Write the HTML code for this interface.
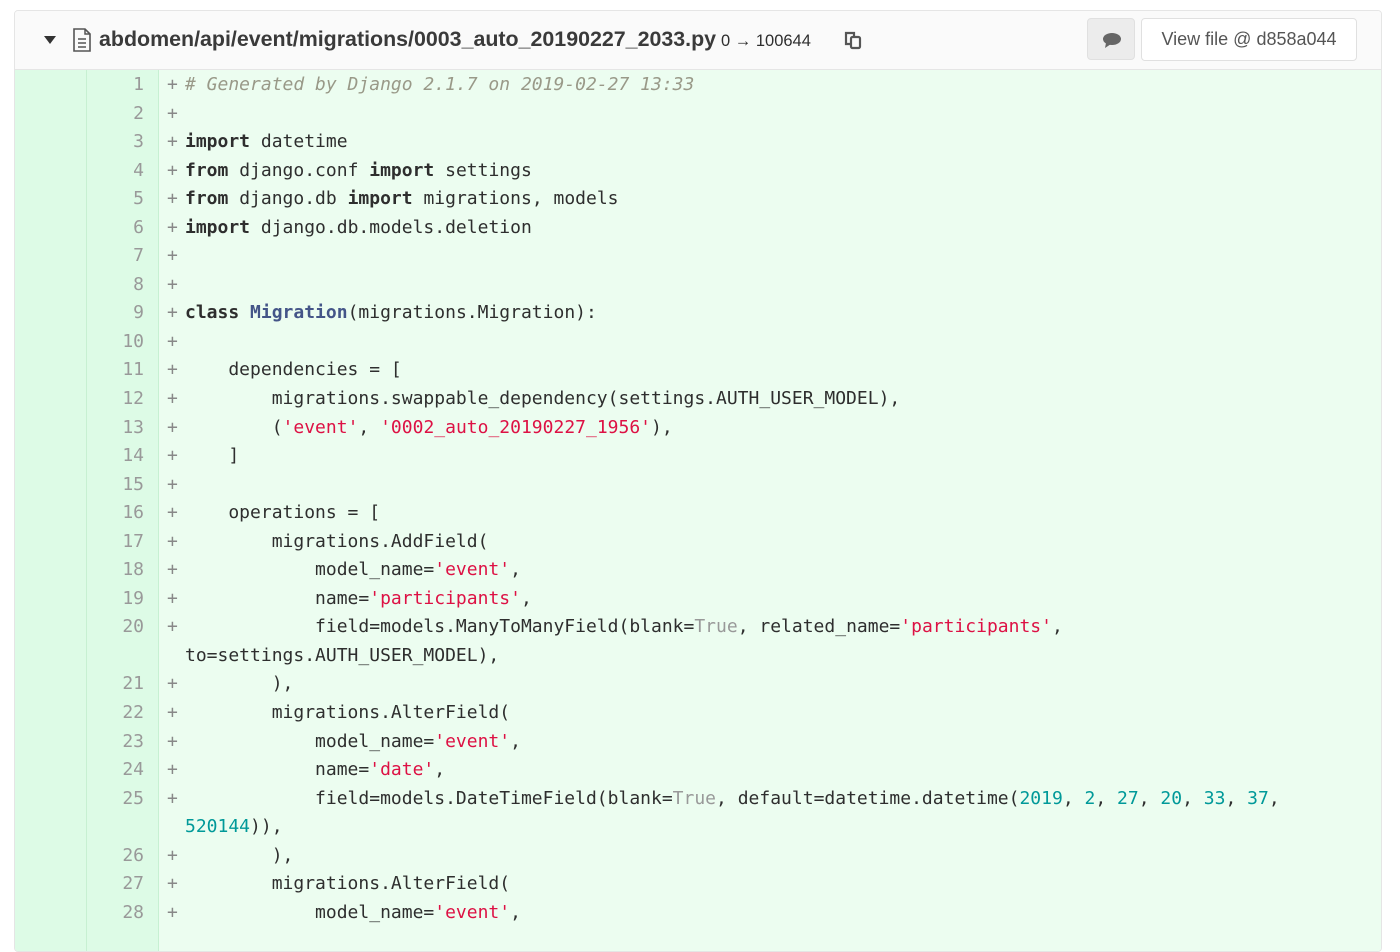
<!DOCTYPE html>
<html><head><meta charset="utf-8"><style>
body{margin:0;background:#fff;width:1400px;height:924px;overflow:hidden;font-family:"Liberation Sans",sans-serif}
.box{position:absolute;left:14px;top:10px;width:1366px;height:940px;border:1px solid #e5e5e5;border-radius:4px;overflow:hidden}
.hdr{height:58px;background:#fafafa;border-bottom:1px solid #e5e5e5;position:relative}
.path{position:absolute;left:84px;top:16px;font-size:21.4px;font-weight:bold;color:#3a3a3a}
.mode{position:absolute;left:706px;top:21px;font-size:16.5px;color:#2e2e2e}
.cbtn{position:absolute;left:1072px;top:7px;width:48px;height:42px;background:#ececec;border:1px solid #e0e0e0;border-radius:4px;box-sizing:border-box}
.vbtn{position:absolute;left:1126px;top:7px;width:216px;height:43px;background:#fff;border:1px solid #e0e0e0;border-radius:4px;box-sizing:border-box;font-size:18px;color:#555;text-align:center;line-height:41px}
.code{position:relative;background:#ecfdf0;height:900px;padding-top:1px}
.ln1{position:absolute;left:0;top:0;width:71px;height:900px;background:#ddfbe6;border-right:1px solid #c7f0d2}
.ln2{position:absolute;left:72px;top:0;width:71px;height:900px;background:#ddfbe6;border-right:1px solid #c7f0d2}
.r{height:28.55px;line-height:28.55px;font-family:"DejaVu Sans Mono","Liberation Mono",monospace;font-size:18px;white-space:pre;position:relative;color:#2e2e2e}
.n{position:absolute;left:72px;width:57px;text-align:right;color:#999}
.p{position:absolute;left:152px;color:#888}
.t{position:absolute;left:170px}
.k{font-weight:bold}
.c{color:#998;font-style:italic}
.s{color:#d14}
.m{color:#099}
.g{color:#999}
.cl{color:#458;font-weight:bold}
</style></head><body>
<div class="box">
<div class="hdr">
<svg style="position:absolute;left:28px;top:24px" width="14" height="10"><path d="M1 1h12L7 9z" fill="#333"/></svg>
<svg style="position:absolute;left:57px;top:17px" width="20" height="24" viewBox="0 0 20 24"><path d="M2 1h11l5 5v17H2z" fill="none" stroke="#555" stroke-width="1.6"/><path d="M13 1v5h5M6 11h8M6 15h8M6 19h8" stroke="#555" stroke-width="1.5" fill="none"/></svg>
<div class="path">abdomen/api/event/migrations/0003_auto_20190227_2033.py</div>
<div class="mode">0 → 100644</div>
<svg style="position:absolute;left:828px;top:19px" width="20" height="20" viewBox="0 0 20 20"><path d="M7 14H3V3h8v3" fill="none" stroke="#555" stroke-width="2.2"/><rect x="8" y="7" width="9" height="11" rx="1.5" fill="none" stroke="#555" stroke-width="2.2"/></svg>
<div class="cbtn"><svg style="position:absolute;left:14px;top:13px" width="20" height="16" viewBox="0 0 20 16"><ellipse cx="10" cy="7" rx="9" ry="6" fill="#666"/><path d="M4 11l-1 5 6-4z" fill="#666"/></svg></div>
<div class="vbtn">View file @ d858a044</div>
</div>
<div class="code">
<div class="ln1"></div><div class="ln2"></div>
<div class="r"><span class="n">1</span><span class="p">+</span><span class="t"><span class="c"># Generated by Django 2.1.7 on 2019-02-27 13:33</span></span></div>
<div class="r"><span class="n">2</span><span class="p">+</span></div>
<div class="r"><span class="n">3</span><span class="p">+</span><span class="t"><span class="k">import</span> datetime</span></div>
<div class="r"><span class="n">4</span><span class="p">+</span><span class="t"><span class="k">from</span> django.conf <span class="k">import</span> settings</span></div>
<div class="r"><span class="n">5</span><span class="p">+</span><span class="t"><span class="k">from</span> django.db <span class="k">import</span> migrations, models</span></div>
<div class="r"><span class="n">6</span><span class="p">+</span><span class="t"><span class="k">import</span> django.db.models.deletion</span></div>
<div class="r"><span class="n">7</span><span class="p">+</span></div>
<div class="r"><span class="n">8</span><span class="p">+</span></div>
<div class="r"><span class="n">9</span><span class="p">+</span><span class="t"><span class="k">class</span> <span class="cl">Migration</span>(migrations.Migration):</span></div>
<div class="r"><span class="n">10</span><span class="p">+</span></div>
<div class="r"><span class="n">11</span><span class="p">+</span><span class="t">    dependencies = [</span></div>
<div class="r"><span class="n">12</span><span class="p">+</span><span class="t">        migrations.swappable_dependency(settings.AUTH_USER_MODEL),</span></div>
<div class="r"><span class="n">13</span><span class="p">+</span><span class="t">        (<span class="s">'event'</span>, <span class="s">'0002_auto_20190227_1956'</span>),</span></div>
<div class="r"><span class="n">14</span><span class="p">+</span><span class="t">    ]</span></div>
<div class="r"><span class="n">15</span><span class="p">+</span></div>
<div class="r"><span class="n">16</span><span class="p">+</span><span class="t">    operations = [</span></div>
<div class="r"><span class="n">17</span><span class="p">+</span><span class="t">        migrations.AddField(</span></div>
<div class="r"><span class="n">18</span><span class="p">+</span><span class="t">            model_name=<span class="s">'event'</span>,</span></div>
<div class="r"><span class="n">19</span><span class="p">+</span><span class="t">            name=<span class="s">'participants'</span>,</span></div>
<div class="r"><span class="n">20</span><span class="p">+</span><span class="t">            field=models.ManyToManyField(blank=<span class="g">True</span>, related_name=<span class="s">'participants'</span>,</span></div>
<div class="r"><span class="t">to=settings.AUTH_USER_MODEL),</span></div>
<div class="r"><span class="n">21</span><span class="p">+</span><span class="t">        ),</span></div>
<div class="r"><span class="n">22</span><span class="p">+</span><span class="t">        migrations.AlterField(</span></div>
<div class="r"><span class="n">23</span><span class="p">+</span><span class="t">            model_name=<span class="s">'event'</span>,</span></div>
<div class="r"><span class="n">24</span><span class="p">+</span><span class="t">            name=<span class="s">'date'</span>,</span></div>
<div class="r"><span class="n">25</span><span class="p">+</span><span class="t">            field=models.DateTimeField(blank=<span class="g">True</span>, default=datetime.datetime(<span class="m">2019</span>, <span class="m">2</span>, <span class="m">27</span>, <span class="m">20</span>, <span class="m">33</span>, <span class="m">37</span>,</span></div>
<div class="r"><span class="t"><span class="m">520144</span>)),</span></div>
<div class="r"><span class="n">26</span><span class="p">+</span><span class="t">        ),</span></div>
<div class="r"><span class="n">27</span><span class="p">+</span><span class="t">        migrations.AlterField(</span></div>
<div class="r"><span class="n">28</span><span class="p">+</span><span class="t">            model_name=<span class="s">'event'</span>,</span></div>
</div>
</div>
</body></html>
